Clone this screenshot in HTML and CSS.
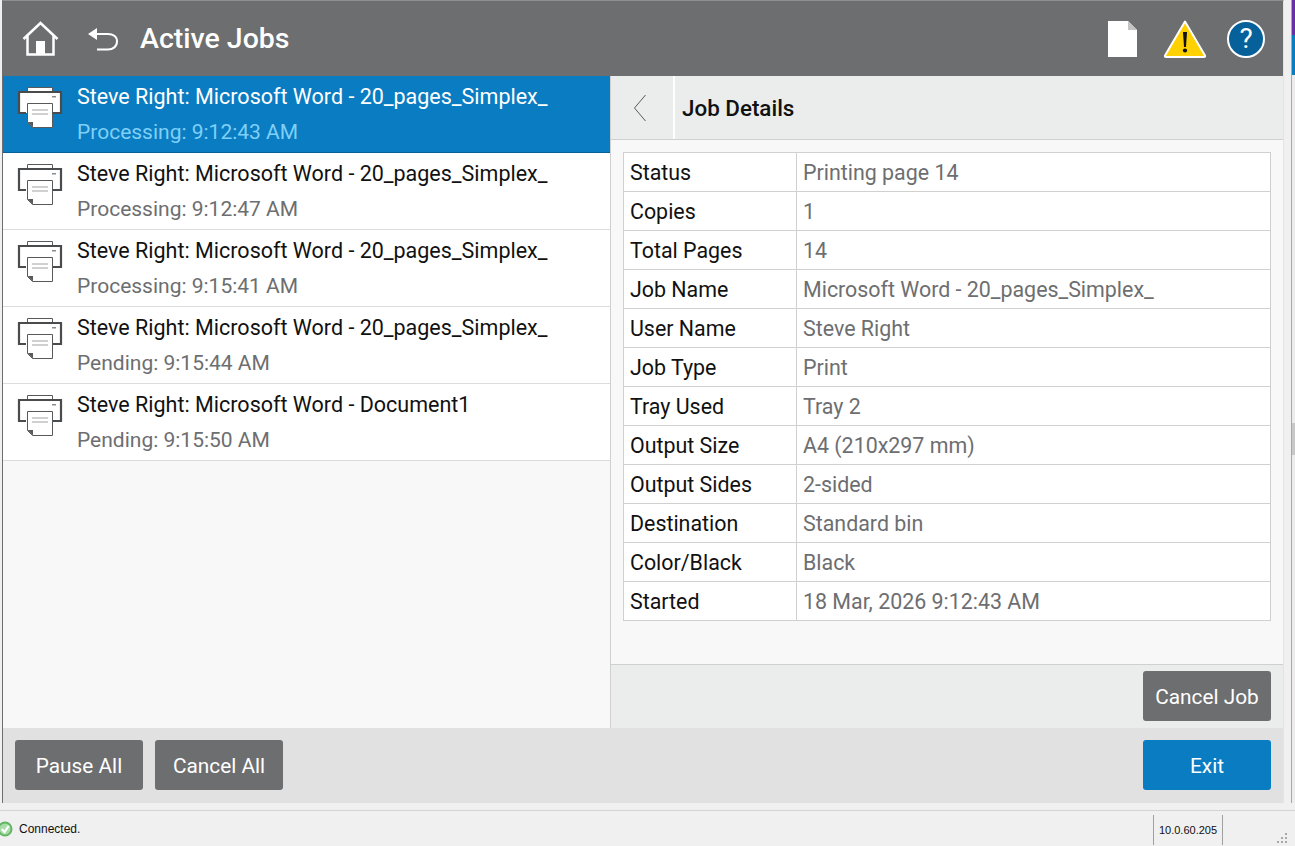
FILE: index.html
```html
<!DOCTYPE html>
<html lang="en">
<head>
<meta charset="utf-8">
<title>Active Jobs</title>
<link rel="stylesheet" href="styles.css">
</head>
<body>
<svg class="defs" width="0" height="0" aria-hidden="true">
  <defs>
    <symbol id="printer" viewBox="0 0 46 42">
      <path d="M10.500 6V1.500H35.500V6" fill="#fff" stroke="#58595b" stroke-width="1"/>
      <path d="M1 26V5.500H45V27H36" fill="#fff"/>
      <path d="M9 27H2V6H44V27H36" fill="#fff" stroke="#4a4b4d" stroke-width="2.200"/>
      <rect x="35" y="10" width="4" height="1.500" fill="#8a8b8d"/>
      <path d="M10.500 17.500H35.500V41.500H15.500L10.500 36.500Z" fill="#fff" stroke="#58595b" stroke-width="1"/>
      <path d="M10.500 36L16 36V41.500Z" fill="#58595b"/>
      <path d="M15 24H31M15 28H31" stroke="#a0a1a3" stroke-width="1" fill="none"/>
    </symbol>
  </defs>
</svg>
<div class="app">
  <header class="topbar">
    <div class="top-left">
      <svg class="home" viewBox="0 0 38 37" width="38" height="37"><path d="M2.500 19L19.500 3L36.500 19M6.500 15V34.500H32.500V15" fill="none" stroke="#fff" stroke-width="2.500"/><rect x="15" y="21" width="9" height="13" fill="#fff"/></svg>
      <svg class="back" viewBox="0 0 32 26" width="32" height="26"><path d="M10 2L1 8L10 14Z" fill="#fff"/><path d="M9 8H21C26 8 30 10.500 30 15.500C30 20.500 26 23.500 21 23.500H10" fill="none" stroke="#fff" stroke-width="2"/></svg>
      <h1 class="title">Active Jobs</h1>
    </div>
    <div class="top-right">
      <svg class="doc" viewBox="0 0 30 36" width="30" height="36"><path d="M0 0H20L29 9V36H0Z" fill="#fff"/><path d="M20 0L29 9H20Z" fill="#c4c4c4"/></svg>
      <svg class="warn" viewBox="0 0 44 40" width="44" height="40"><path d="M22 2.500L42 36.500Q42.500 38 41 38H3Q1.500 38 2 36.500Z" fill="#ffd100" stroke="#fff" stroke-width="2" stroke-linejoin="round"/><path d="M20 13H24L23 28H21Z" fill="#111"/><circle cx="22" cy="31.500" r="2.100" fill="#111"/></svg>
      <div class="help">?</div>
    </div>
  </header>
  <main class="content">
    <section class="jobs">
      <ul class="job-list">
        <li class="job selected"><svg class="pic" width="46" height="42"><use href="#printer"/></svg><div><p class="job-name">Steve Right: Microsoft Word - 20_pages_Simplex_</p><p class="job-state">Processing: 9:12:43 AM</p></div></li>
        <li class="job"><svg class="pic" width="46" height="42"><use href="#printer"/></svg><div><p class="job-name">Steve Right: Microsoft Word - 20_pages_Simplex_</p><p class="job-state">Processing: 9:12:47 AM</p></div></li>
        <li class="job"><svg class="pic" width="46" height="42"><use href="#printer"/></svg><div><p class="job-name">Steve Right: Microsoft Word - 20_pages_Simplex_</p><p class="job-state">Processing: 9:15:41 AM</p></div></li>
        <li class="job"><svg class="pic" width="46" height="42"><use href="#printer"/></svg><div><p class="job-name">Steve Right: Microsoft Word - 20_pages_Simplex_</p><p class="job-state">Pending: 9:15:44 AM</p></div></li>
        <li class="job"><svg class="pic" width="46" height="42"><use href="#printer"/></svg><div><p class="job-name">Steve Right: Microsoft Word - Document1</p><p class="job-state">Pending: 9:15:50 AM</p></div></li>
      </ul>
    </section>
    <section class="details">
      <div class="details-head">
        <div class="chev"><svg viewBox="0 0 14 28" width="14" height="28"><path d="M12.500 1L1.500 14L12.500 27" fill="none" stroke="#58595b" stroke-width="1"/></svg></div>
        <h2 class="details-title">Job Details</h2>
      </div>
      <div class="details-body">
        <table class="info">
          <tr><th>Status</th><td>Printing page 14</td></tr>
          <tr><th>Copies</th><td>1</td></tr>
          <tr><th>Total Pages</th><td>14</td></tr>
          <tr><th>Job Name</th><td>Microsoft Word - 20_pages_Simplex_</td></tr>
          <tr><th>User Name</th><td>Steve Right</td></tr>
          <tr><th>Job Type</th><td>Print</td></tr>
          <tr><th>Tray Used</th><td>Tray 2</td></tr>
          <tr><th>Output Size</th><td>A4 (210x297 mm)</td></tr>
          <tr><th>Output Sides</th><td>2-sided</td></tr>
          <tr><th>Destination</th><td>Standard bin</td></tr>
          <tr><th>Color/Black</th><td>Black</td></tr>
          <tr><th>Started</th><td>18 Mar, 2026 9:12:43 AM</td></tr>
        </table>
      </div>
      <div class="details-foot"><button class="btn">Cancel Job</button></div>
    </section>
  </main>
  <footer class="actions">
    <div class="action-group"><button class="btn">Pause All</button><button class="btn">Cancel All</button></div>
    <button class="btn primary">Exit</button>
  </footer>
</div>
<div class="side-strip">
  <span class="strip-purple"></span><span class="strip-blue"></span><span class="strip-rest"></span><span class="strip-thumb"></span><span class="strip-rest"></span>
</div>
<footer class="status">
  <svg class="ok" viewBox="0 0 16 20" width="16" height="20"><circle cx="5" cy="10" r="7.500" fill="#62b562"/><circle cx="5" cy="10" r="5.500" fill="#a9dca9"/><path d="M1.800 10L4.500 13L8.800 6.800" fill="none" stroke="#fff" stroke-width="2.200"/></svg>
  <span class="status-text">Connected.</span>
  <span class="status-ip">10.0.60.205</span>
  <svg class="grip" viewBox="0 0 11 11" width="11" height="11"><path d="M8 1h2v2H8zM4 5h2v2H4zM8 5h2v2H8zM0 9h2v2H0zM4 9h2v2H4zM8 9h2v2H8z" fill="#a8a8a8"/></svg>
</footer>
</body>
</html>
```
FILE: styles.css
```css
* { box-sizing: border-box; }
html, body { margin: 0; height: 846px; overflow: hidden; }
body { position: relative; background: #f0f0f0; font-family: Roboto, "Noto Sans", sans-serif; width: 1295px; }
.defs { position: absolute; }
.app { width: 1282px; height: 803px; margin-left: 2px; border-top: 1px solid #8f8f8f; border-left: 1px solid #6d6e70; border-right: 1px solid #e4e4e4; display: flex; flex-direction: column; background: #fff; }
.topbar { height: 75px; background: #6d6e70; display: flex; justify-content: space-between; align-items: center; padding: 0 18px 0 18px; flex: none; }
.top-left { display: flex; align-items: center; }
.home { margin-right: 28px; }
.back { margin-right: 21px; }
.title { margin: 0; color: #fff; font-size: 28.500px; font-weight: 500; }
.top-right { display: flex; align-items: center; }
.doc { margin-right: 25px; }
.warn { margin-right: 20px; }
.help { width: 38px; height: 38px; border-radius: 50%; background: #06609a; border: 2px solid #fff; color: #fff; font-size: 28px; font-weight: 400; line-height: 34px; text-align: center; }
.content { flex: 1; display: flex; min-height: 0; }
.jobs { width: 608px; background: #f8f8f8; border-right: 1px solid #d0d0d0; flex: none; }
.job-list { list-style: none; margin: 0; padding: 0; }
.job { height: 77px; display: flex; gap: 14px; padding: 10px 0 0 14px; background: #fff; border-bottom: 1px solid #dcdcdc; }
.job.selected { background: #0a7cc2; border-bottom-color: #06609a; }
.pic { flex: none; }
.job-name, .job-state { margin: 0; line-height: 30px; white-space: nowrap; }
.job-name { color: #111; height: 35px; margin-top: -4px; font-size: 21.500px; }
.job-state { color: #6d6e70; font-size: 21px; }
.selected .job-name { color: #fff; }
.selected .job-state { color: #7fd0f7; }
.details { flex: 1; display: flex; flex-direction: column; background: #f8f8f8; min-width: 0; }
.details-head { height: 64px; display: flex; align-items: center; background: #ebeded; border-bottom: 1px solid #d0d0d0; flex: none; }
.chev { width: 64px; height: 100%; display: flex; align-items: center; justify-content: center; padding-right: 4px; border-right: 2px solid #fff; }
.details-title { margin: 0 0 0 7px; font-size: 22.400px; font-weight: 500; color: #111; }
.details-body { flex: 1; padding: 12px 12px 0 12px; }
.info { width: 100%; border-collapse: collapse; background: #fff; }
.info th, .info td { height: 39px; border: 1px solid #d0d0d0; padding: 0 6px; text-align: left; font-weight: 400; white-space: nowrap; font-size: 21.400px; }
.info th { width: 173px; color: #111; }
.info td { color: #6d6e70; }
.details-foot { height: 64px; background: #ebeded; border-top: 1px solid #d0d0d0; display: flex; justify-content: flex-end; align-items: center; padding: 0 12px 2px 0; flex: none; }
.actions { height: 75px; background: #e1e1e1; display: flex; justify-content: space-between; align-items: center; padding: 0 12px 2px; flex: none; }
.action-group { display: flex; gap: 12px; }
.btn { width: 128px; height: 50px; border: 0; border-radius: 3px; background: #6d6e70; color: #fff; font: 400 20.800px Roboto, sans-serif; padding: 2px 0 0; }
.primary { background: #0a7cc2; }
.side-strip { position: absolute; left: 1291px; top: 0; width: 4px; height: 803px; display: flex; flex-direction: column; border-left: 1px solid #a8a8a8; }
.strip-purple { height: 35px; background: #6b2fa5; flex: none; }
.strip-blue { height: 40px; background: #0a7cc2; flex: none; }
.strip-rest { flex: 1; background: #ececec; }
.strip-thumb { height: 32px; background: #c8c8c8; flex: none; }
.status { position: absolute; left: 0; right: 0; top: 810px; height: 36px; border-top: 1px solid #d4d4d4; display: flex; align-items: center; font: 12px "Liberation Sans", sans-serif; color: #111; }
.ok { flex: none; }
.status-text { margin-left: 3px; flex: 1; }
.status-ip { width: 70px; height: 30px; margin-right: 72px; margin-top: 3px; line-height: 30px; border-left: 1px solid #a0a0a0; border-right: 1px solid #a0a0a0; text-align: center; font-size: 11px; }
.grip { position: absolute; right: 7px; bottom: 3px; }
```
